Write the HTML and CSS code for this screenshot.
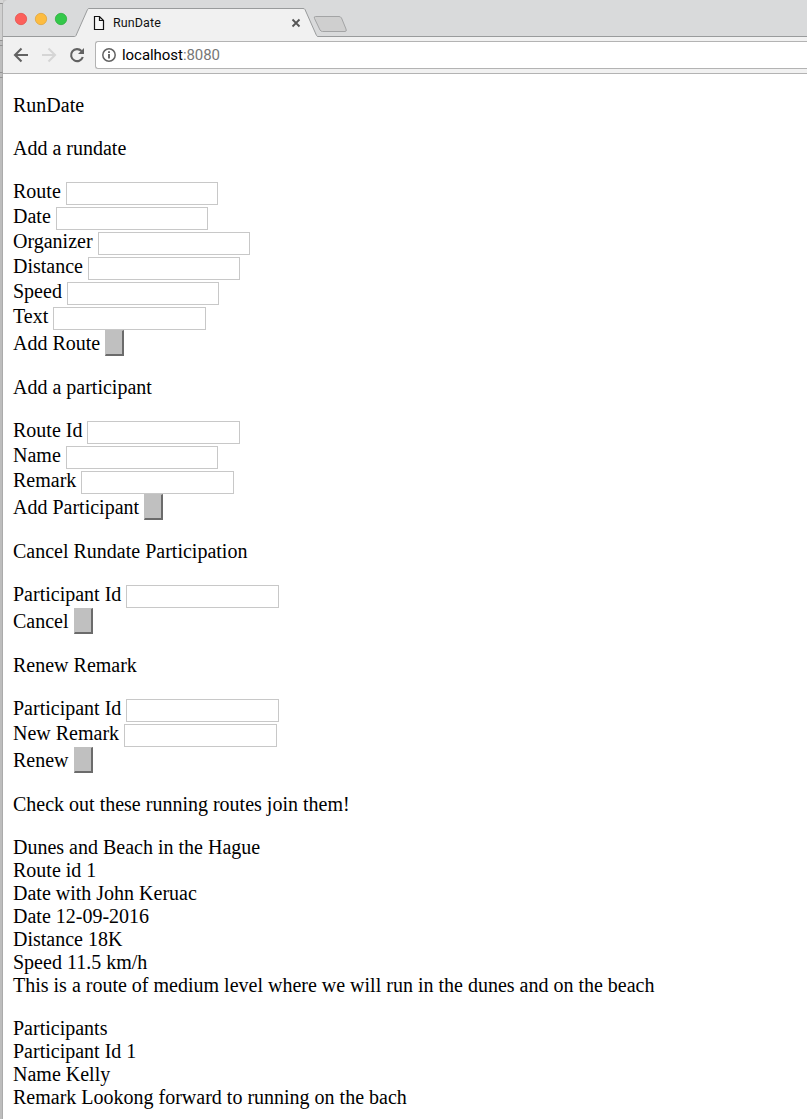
FILE: index.html
```html
<!DOCTYPE html>
<html lang="en">
<head>
<meta charset="utf-8">
<title>RunDate</title>
<link rel="stylesheet" href="styles.css">
</head>
<body>
<div class="screen">
<svg class="behind" width="3" height="1119" viewBox="0 0 3 1119">
  <rect width="3" height="1119" fill="#bdbdbd"/>
  <rect width="3" height="4" fill="#d5d5d5"/><rect y="4" width="3" height="36" fill="#d0d0d0"/>
  <path d="M0 3.5h3M0 40.5h3M0 45.5h3M0 72.5h3M0 77.5h3" stroke="#929292"/>
  <rect x="2" y="3" width="1" height="1116" fill="#a2a2a2" opacity=".65"/>
</svg>
<div class="window">
  <header class="tabs">
    <svg class="tab-shapes" width="804" height="37" viewBox="3 0 804 37">
      <path d="M3 0H7Q3.500 1 3 5Z" fill="#c9c9c9"/>
      <path d="M75 37L87.500 9.500Q88 8.500 89 8.500H303Q304.500 8.500 305 10L317.500 37Z" fill="#f1f1f1"/>
      <path d="M3 36.500H74.500Q75.500 36.500 76 35.500L87.500 9.500Q88 8.500 89 8.500H303Q304.500 8.500 305 9.500L316.500 35.500Q317 36.500 318 36.500H807" fill="none" stroke="#999b9c"/>
      <path d="M315.500 16.500H339Q340.500 16.500 341.500 18L346 29Q347 31.500 345 31.500H322.500Q321 31.500 320 30L314.500 18.500Q313.500 16.500 315.500 16.500Z" fill="#cfcfcf" stroke="#a3a4a5"/>
      <circle cx="21" cy="19" r="5.700" fill="#fc605b" stroke="#e24b46" stroke-width=".7"/>
      <circle cx="41" cy="19" r="5.700" fill="#fdbc40" stroke="#dea034" stroke-width=".7"/>
      <circle cx="61" cy="19" r="5.700" fill="#34c84a" stroke="#25aa37" stroke-width=".7"/>
      <path d="M94.500 16.500H99.500L103.500 20.500V29.500H94.500ZM99.500 16.500V20.500H103.500" fill="#f7f7f7" stroke="#111" stroke-width="1.200"/>
      <path d="M292.500 19.500L299.500 26.500M299.500 19.500L292.500 26.500" stroke="#555" stroke-width="1.800"/>
    </svg>
    <span class="tab-title">RunDate</span>
  </header>
  <div class="toolbar">
    <svg class="nav" width="92" height="36" viewBox="3 37 92 36">
      <path d="M28 55H15.500M21.500 48.500L15 55L21.500 61.500" fill="none" stroke="#626262" stroke-width="2.100"/>
      <path d="M42 55H54.500M48.500 48.500L55 55L48.500 61.500" fill="none" stroke="#d5d5d5" stroke-width="2.100"/>
      <path d="M81.500 51A6 6 0 1 0 82.800 57" fill="none" stroke="#626262" stroke-width="2.100"/>
      <path d="M84 48V54H78Z" fill="#626262"/>
    </svg>
    <div class="address">
      <svg width="14" height="14" viewBox="0 0 14 14"><circle cx="7" cy="7" r="6.200" fill="none" stroke="#626262" stroke-width="1.500"/><path d="M7 6V10.500M7 3.300V5" stroke="#626262" stroke-width="1.900"/></svg>
      <span class="url">localhost<span class="port">:8080</span></span>
    </div>
  </div>
  <main class="page">
    <p>RunDate</p>
    <p>Add a rundate</p>
    <form>
      <label class="row w48"><span>Route</span><input type="text"></label>
      <label class="row w38"><span>Date</span><input type="text"></label>
      <label class="row w80"><span>Organizer</span><input type="text"></label>
      <label class="row w70"><span>Distance</span><input type="text"></label>
      <label class="row w49"><span>Speed</span><input type="text"></label>
      <label class="row w35"><span>Text</span><input type="text" class="wide"></label>
      <div class="row action w87"><span>Add Route</span><button type="button" aria-label="Add Route"></button></div>
    </form>
    <p>Add a participant</p>
    <form>
      <label class="row w69"><span>Route Id</span><input type="text" class="wide"></label>
      <label class="row w48"><span>Name</span><input type="text"></label>
      <label class="row w63"><span>Remark</span><input type="text" class="wide"></label>
      <div class="row action w126"><span>Add Participant</span><button type="button" aria-label="Add Participant"></button></div>
    </form>
    <p>Cancel Rundate Participation</p>
    <form>
      <label class="row w108"><span>Participant Id</span><input type="text" class="wide"></label>
      <div class="row action w56"><span>Cancel</span><button type="button" aria-label="Cancel"></button></div>
    </form>
    <p>Renew Remark</p>
    <form>
      <label class="row w108"><span>Participant Id</span><input type="text" class="wide"></label>
      <label class="row w106"><span>New Remark</span><input type="text" class="wide"></label>
      <div class="row action w56"><span>Renew</span><button type="button" aria-label="Renew"></button></div>
    </form>
    <p>Check out these running routes join them!</p>
    <p>Dunes and Beach in the Hague<br>Route id 1<br>Date with John Keruac<br>Date 12-09-2016<br>Distance 18K<br>Speed 11.5 km/h<br>This is a route of medium level where we will run in the dunes and on the beach</p>
    <p>Participants<br>Participant Id 1<br>Name Kelly<br>Remark Lookong forward to running on the bach</p>
  </main>
</div>
</div>
</body>
</html>
```
FILE: styles.css
```css
* { box-sizing: border-box; }
body { margin: 0; background: #fff; }
.screen { display: flex; height: 1119px; overflow: hidden; }
.behind { flex: none; display: block; }
.window { flex: 1; min-width: 0; }
.tabs { display: grid; height: 37px; background: #d9dadb; }
.tab-shapes, .tab-title { grid-area: 1 / 1; }
.tab-shapes { display: block; }
.tab-title { margin-left: 110px; padding-top: 15px; font: 12.5px/16px Roboto, sans-serif; letter-spacing: 0.1px; color: #111; z-index: 1; }
.toolbar { display: flex; height: 37px; background: #f1f1f1; border-bottom: 1px solid #b3b3b3; }
.nav { flex: none; }
.address { flex: 1; display: flex; align-items: center; gap: 6px; height: 28px; margin-top: 4px; padding-left: 6px; background: #fff; border: 1px solid #b3b3b3; border-right: 0; border-radius: 3px 0 0 3px; }
.url { font: 15px/20px Roboto, sans-serif; letter-spacing: -0.05px; color: #000; }
.port { color: #777; }
.page { padding: 20px 10px 0; font: 20px/23px "Liberation Serif", "Times New Roman", serif; color: #000; }
p { margin: 0 0 20px; }
form { margin: 0 0 20px; }
.row { display: flex; align-items: flex-start; gap: 5px; height: 25px; }
.row span { flex: none; white-space: nowrap; }
.row input { width: 152px; height: 23px; margin: 2px 0 0; padding: 1px; border: 1px solid #c8c8c8; background: #fff; font: 14px "Liberation Sans", sans-serif; }
.row .wide { width: 153px; }
.action { height: 26px; }
.action span { padding-top: 2px; }
.action button { width: 19px; height: 26px; padding: 0; background: #c0c0c0; border: solid; border-width: 1px 2px 2px 1px; border-color: #c0c0c0 #6b6b6b #6b6b6b #c0c0c0; }
.w35 span { width: 35px; }
.w38 span { width: 38px; }
.w48 span { width: 48px; }
.w49 span { width: 49px; }
.w56 span { width: 56px; }
.w63 span { width: 63px; }
.w69 span { width: 69px; }
.w70 span { width: 70px; }
.w80 span { width: 80px; }
.w87 span { width: 87px; }
.w106 span { width: 106px; }
.w108 span { width: 108px; }
.w126 span { width: 126px; }
```
